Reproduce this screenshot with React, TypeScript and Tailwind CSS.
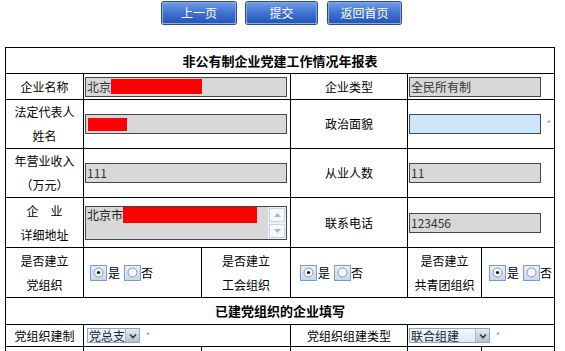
import React from 'react';

const font = { fontFamily: '"Noto Sans CJK SC", "Liberation Sans", sans-serif' };

const Btn: React.FC<{ label: string; className: string }> = ({ label, className }) => (
    <button
        className={`${className} h-[22px] shrink-0 rounded-[2px] border border-[#8fa9d6] bg-gradient-to-b from-[#6d9be6] via-[#3f72d2] to-[#2456bb] text-[12px] text-white leading-none shadow-[0_0_0_1px_#2b4c8c]`}
    >
        {label}
    </button>
);

const Cell: React.FC<{ className?: string; children?: React.ReactNode }> = ({ className = '', children }) => (
    <div className={`bg-white flex items-center ${className}`}>{children}</div>
);

const Label: React.FC<{ lines: string[]; className?: string }> = ({ lines, className = '' }) => (
    <Cell className={`justify-center ${className}`}>
        <div className="text-center text-[12px] leading-[24px] text-black whitespace-nowrap">
            {lines.map((l) => (
                <div key={l}>{l}</div>
            ))}
        </div>
    </Cell>
);

const Field: React.FC<{ w: string; text?: string; blue?: boolean; children?: React.ReactNode }> = ({ w, text, blue, children }) => (
    <div
        className={`${w} h-[20px] border border-[#404850] flex items-center pl-[1px] text-[12px] text-[#333] ${blue ? 'bg-[#cde6fb]' : 'bg-[#d8d8d8]'}`}
    >
        {text}
        {children}
    </div>
);

const Star = () => <span className="ml-[6px] text-[9px] text-[#f26b6b]">*</span>;

const Radio: React.FC<{ checked?: boolean }> = ({ checked }) => (
    <span className="inline-flex w-[17px] h-[16px] items-center justify-center border border-[#7d9cc6] bg-gradient-to-b from-[#e4effa] to-[#c3d9f0]">
        <svg width="11" height="11" viewBox="0 0 11 11">
            <circle cx="5.5" cy="5.5" r="4.5" fill="#f4f8fc" stroke="#8a96a4" strokeWidth="1" />
            {checked && <circle cx="5.5" cy="5.5" r="1.6" fill="#111" />}
        </svg>
    </span>
);

const RadioPair: React.FC<{ pl: string }> = ({ pl }) => (
    <Cell className={pl}>
        <div className="flex items-center text-[12px] text-black">
            <Radio checked />
            <span className="ml-[1px] mr-[4px]">是</span>
            <Radio />
            <span>否</span>
        </div>
    </Cell>
);

const Select: React.FC<{ text: string; w: string }> = ({ text, w }) => (
    <div className={`${w} h-[15px] flex items-center border border-[#8aa8cc] bg-gradient-to-b from-[#f2f8fe] to-[#dceaf8] text-[12px] text-[#223]`}>
        <span className="flex-1 pl-[1px] leading-none whitespace-nowrap">{text}</span>
        <span className="w-[14px] h-[13px] shrink-0 flex items-center justify-center border-l border-[#a8b6c6] bg-gradient-to-b from-[#e8ecf0] to-[#b8c0c8]">
            <svg width="8" height="6" viewBox="0 0 8 6">
                <path d="M1 1.5 L4 4.5 L7 1.5" fill="none" stroke="#333" strokeWidth="1.6" />
            </svg>
        </span>
    </div>
);

const App: React.FC = () => {
    return (
        <div className="w-[565px] h-[351px] overflow-hidden bg-white" style={font}>
            <div className="flex items-start pl-[162px] pt-[2px]">
                <Btn label="上一页" className="w-[74px]" />
                <Btn label="提交" className="w-[71px] ml-[10px]" />
                <Btn label="返回首页" className="w-[73px] ml-[11px]" />
            </div>

            <div className="ml-[5px] mt-[23px] w-[550px] border border-black bg-black grid gap-px grid-cols-[77px_117px_88px_116px_73px_72px] grid-rows-[25px_25px_48px_48px_49px_49px_26px_21px_30px]">
                {/* title */}
                <Cell className="col-span-6 justify-center">
                    <span className="text-[13px] font-bold text-black">非公有制企业党建工作情况年报表</span>
                </Cell>

                {/* row 1 */}
                <Label lines={['企业名称']} />
                <Cell className="col-span-2 pl-px">
                    <Field w="w-[202px]">
                        <span>北京</span>
                        <span className="w-[91px] h-[15px] bg-[#ff0000]" />
                    </Field>
                </Cell>
                <Label lines={['企业类型']} />
                <Cell className="col-span-2 pl-px">
                    <Field w="w-[132px]" text="全民所有制" />
                </Cell>

                {/* row 2 */}
                <Label lines={['法定代表人', '姓名']} />
                <Cell className="col-span-2 pl-px">
                    <Field w="w-[202px]">
                        <span className="ml-[1px] w-[39px] h-[13px] bg-[#ff0000]" />
                    </Field>
                </Cell>
                <Label lines={['政治面貌']} />
                <Cell className="col-span-2 pl-px">
                    <Field w="w-[132px]" blue />
                    <Star />
                </Cell>

                {/* row 3 */}
                <Label lines={['年营业收入', '（万元）']} />
                <Cell className="col-span-2 pl-px">
                    <Field w="w-[202px]" text="111" />
                </Cell>
                <Label lines={['从业人数']} />
                <Cell className="col-span-2 pl-px">
                    <Field w="w-[132px]" text="11" />
                </Cell>

                {/* row 4 */}
                <Label lines={['企　业', '详细地址']} />
                <Cell className="col-span-2 pl-px">
                    <div className="w-[202px] h-[34px] border border-[#404850] bg-[#d8d8d8] flex">
                        <div className="flex-1 flex items-start pl-[1px] text-[12px] text-[#222] leading-[16px]">
                            <span>北京市</span>
                            <span className="w-[134px] h-[16px] bg-[#ff0000]" />
                        </div>
                        <div className="w-[18px] flex flex-col bg-[#eef2f6]">
                            <div className="flex-1 m-[1px] border border-[#c8d4e2] bg-[#f6f8fb] flex items-center justify-center">
                                <svg width="7" height="4" viewBox="0 0 7 4"><path d="M0 4 L3.5 0 L7 4Z" fill="#a9b6c6" /></svg>
                            </div>
                            <div className="flex-1 m-[1px] border border-[#c8d4e2] bg-[#f6f8fb] flex items-center justify-center">
                                <svg width="7" height="4" viewBox="0 0 7 4"><path d="M0 0 L3.5 4 L7 0Z" fill="#a9b6c6" /></svg>
                            </div>
                        </div>
                    </div>
                </Cell>
                <Label lines={['联系电话']} />
                <Cell className="col-span-2 pl-px">
                    <Field w="w-[132px]" text="123456" />
                </Cell>

                {/* row 5 */}
                <Label lines={['是否建立', '党组织']} />
                <RadioPair pl="pl-[6px]" />
                <Label lines={['是否建立', '工会组织']} />
                <RadioPair pl="pl-[9px]" />
                <Label lines={['是否建立', '共青团组织']} />
                <RadioPair pl="pl-[7px]" />

                {/* row 6 */}
                <Cell className="col-span-6 justify-center">
                    <span className="text-[13px] font-bold text-black">已建党组织的企业填写</span>
                </Cell>

                {/* row 7 */}
                <Label lines={['党组织建制']} />
                <Cell className="col-span-2 pl-[3px]">
                    <Select text="党总支" w="w-[53px]" />
                    <Star />
                </Cell>
                <Label lines={['党组织组建类型']} />
                <Cell className="col-span-2 pl-px">
                    <Select text="联合组建" w="w-[81px]" />
                    <Star />
                </Cell>

                {/* row 8 (cut off) */}
                <Cell />
                <Cell />
                <Cell />
                <Cell />
                <Cell />
                <Cell />
            </div>
        </div>
    );
};

export default App;
